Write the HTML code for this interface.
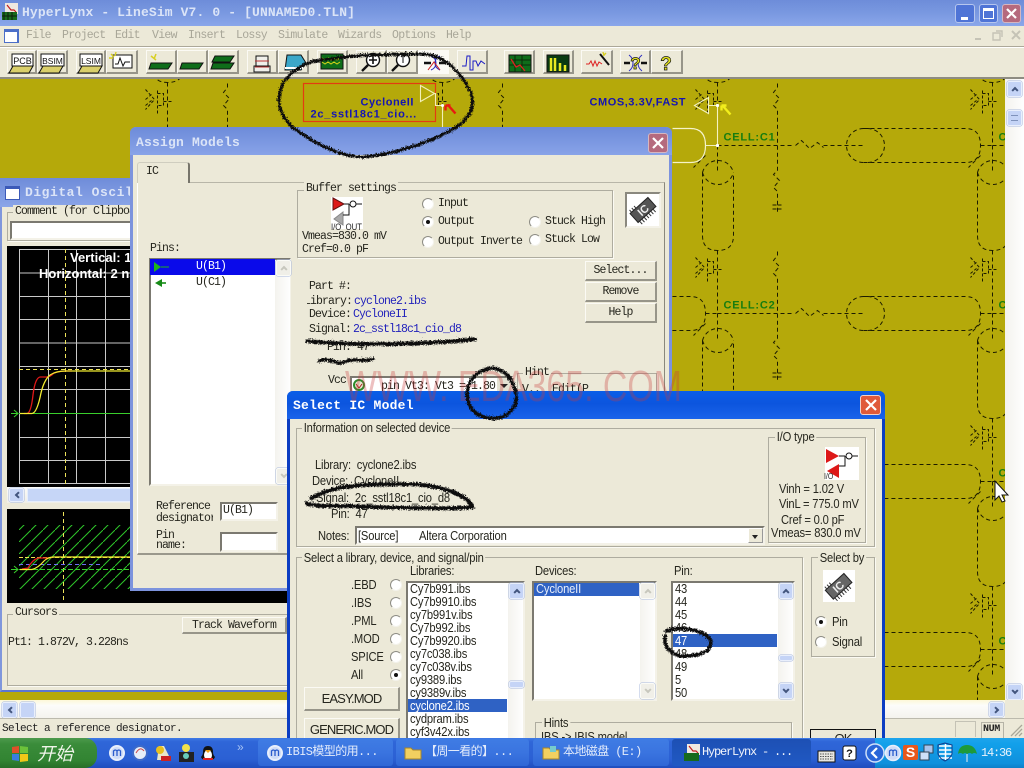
<!DOCTYPE html>
<html><head><meta charset="utf-8"><title>HyperLynx</title>
<style>
html,body{margin:0;padding:0;background:#ece9d8}
#p{position:relative;width:1024px;height:768px;overflow:hidden;background:#ece9d8}
.a{position:absolute;box-sizing:border-box}
.t{position:absolute;white-space:pre;line-height:14px;height:14px;color:#26261e}
.m{font-family:"Liberation Mono",monospace;font-size:11.5px;letter-spacing:-.9px}
.s{font-family:"Liberation Sans",sans-serif;font-size:13px;letter-spacing:-.2px}
.t.s,.gt.s{transform:scaleX(.86);transform-origin:0 50%}
.b{position:absolute;box-sizing:border-box;background:#ece9d8;border:1px solid;border-color:#fbfaf4 #979589 #979589 #fbfaf4;border-right-width:2px;border-bottom-width:2px;text-align:center;color:#26261e}
.b.s{letter-spacing:-.9px}
.sk{position:absolute;box-sizing:border-box;background:#fff;border:2px solid;border-color:#7b7970 #f4f2e8 #f4f2e8 #7b7970}
.g{position:absolute;box-sizing:border-box;border:1px solid #aeac9f;box-shadow:1px 1px 0 #fbfaf3}
.gt{position:absolute;white-space:pre;line-height:14px;height:14px;background:#ece9d8;padding:0 2px;color:#26261e}
.r{position:absolute;width:12px;height:12px;box-sizing:border-box;border-radius:50%;background:#fff;border:1.5px solid;border-color:#8d8c84 #f4f3ec #f4f3ec #8d8c84}
.r.c::after{content:"";position:absolute;left:2.5px;top:2.5px;width:4px;height:4px;border-radius:50%;background:#111}
.sb{position:absolute;box-sizing:border-box;background:linear-gradient(90deg,#f4f3ee,#fefefe)}
.x{position:absolute;box-sizing:border-box;background:#c5d4f6;border:1px solid #e9effc;border-radius:2px;box-shadow:0 0 0 .5px #a8b8dc}
.x::after{content:"";position:absolute;left:50%;top:50%;width:5px;height:5px;box-sizing:border-box;border:solid #42557e;border-width:2px 0 0 2px}
.x.u::after{transform:translate(-50%,-25%) rotate(45deg)}
.x.d::after{transform:translate(-50%,-75%) rotate(225deg)}
.x.l::after{transform:translate(-25%,-50%) rotate(-45deg)}
.x.ri::after{transform:translate(-75%,-50%) rotate(135deg)}
.x.n::after{display:none}
.dis{background:#f0efe8;border-color:#fbfbf6}
.dis::after{border-color:#c7c7bd}
.sel{position:absolute;background:#2f62c4}
.tb{position:absolute;top:739px;height:27px;box-sizing:border-box;background:linear-gradient(180deg,#3f7ce4,#3a74e0 50%,#2f67d6);border-radius:3px;font-family:"Liberation Mono","Noto Sans CJK SC",sans-serif;font-size:12px;letter-spacing:-.6px;color:#e4ecfb;line-height:27px;white-space:pre}
</style></head><body><div id="p">

<!-- main title -->
<div class="a" style="left:0;top:0;width:1024px;height:26px;background:linear-gradient(180deg,#6d8cd9,#7b9ae1 55%,#8aa6ea)"></div>
<svg class="a" style="left:2px;top:3px" width="17" height="18"><rect x="3" y="0" width="13" height="11" fill="#efe8e0"/><path d="M5 2l4 5 3 0 2 2" stroke="#c21c1c" stroke-width="1.2" fill="none"/><rect x="0" y="9" width="15" height="8" fill="#176a1c"/><path d="M2 9v8M6 9v8M10 9v8M0 13h15" stroke="#0c1f0c"/></svg>
<div class="t m" style="left:22px;top:6px;font-size:13px;font-weight:bold;letter-spacing:.13px;color:#dbe4f7">HyperLynx - LineSim V7. 0 - [UNNAMED0.TLN]</div>
<div class="a" style="left:955px;top:4px;width:20px;height:19px;background:#4f74d6;border:1px solid #b6c6ee;border-radius:3px"><div class="a" style="left:5px;top:12px;width:7px;height:3px;background:#fff"></div></div>
<div class="a" style="left:979px;top:4px;width:19px;height:19px;background:#4f74d6;border:1px solid #b6c6ee;border-radius:3px"><div class="a" style="left:3px;top:3px;width:11px;height:11px;border:1px solid #fff;border-top-width:3px"></div></div>
<div class="a" style="left:1002px;top:4px;width:19px;height:19px;background:#b56a7e;border:1px solid #d6b6c0;border-radius:3px"><svg class="a" style="left:2px;top:2px" width="13" height="13"><path d="M2 2l9 9M11 2l-9 9" stroke="#fff" stroke-width="2.2"/></svg></div>

<!-- menu -->
<div class="a" style="left:4px;top:29px;width:15px;height:14px;background:#fff;border:1px solid #4c6fc8;border-top-width:3px;border-right-width:2px"></div>
<div class="t m" style="left:26px;top:29px;color:#a8a698;letter-spacing:-.7px">File</div>
<div class="t m" style="left:62px;top:29px;color:#a8a698;letter-spacing:-.7px">Project</div>
<div class="t m" style="left:115px;top:29px;color:#a8a698;letter-spacing:-.7px">Edit</div>
<div class="t m" style="left:152px;top:29px;color:#a8a698;letter-spacing:-.7px">View</div>
<div class="t m" style="left:188px;top:29px;color:#a8a698;letter-spacing:-.7px">Insert</div>
<div class="t m" style="left:236px;top:29px;color:#a8a698;letter-spacing:-.7px">Lossy</div>
<div class="t m" style="left:278px;top:29px;color:#a8a698;letter-spacing:-.7px">Simulate</div>
<div class="t m" style="left:338px;top:29px;color:#a8a698;letter-spacing:-.7px">Wizards</div>
<div class="t m" style="left:392px;top:29px;color:#a8a698;letter-spacing:-.7px">Options</div>
<div class="t m" style="left:446px;top:29px;color:#a8a698;letter-spacing:-.7px">Help</div>
<svg class="a" style="left:970px;top:28px" width="52" height="14"><path d="M5 11h6" stroke="#c5c3b6" stroke-width="2"/><path d="M26 3h6v6M23 5h7v7h-7z" stroke="#c5c3b6" stroke-width="1.4" fill="none"/><path d="M42 3l8 8M50 3l-8 8" stroke="#c5c3b6" stroke-width="2"/></svg>
<div class="a" style="left:0;top:46px;width:1024px;height:1px;background:#aca899"></div>
<div class="a" style="left:0;top:47px;width:1024px;height:1px;background:#fff"></div>

<!-- toolbar buttons -->
<div class="b" style="left:7px;top:50px;width:30px;height:24px"></div>
<div class="b" style="left:37px;top:50px;width:31px;height:24px"></div>
<div class="b" style="left:76px;top:50px;width:30px;height:24px"></div>
<div class="b" style="left:106px;top:50px;width:32px;height:24px"></div>
<div class="b" style="left:146px;top:50px;width:31px;height:24px"></div>
<div class="b" style="left:177px;top:50px;width:31px;height:24px"></div>
<div class="b" style="left:208px;top:50px;width:31px;height:24px"></div>
<div class="b" style="left:247px;top:50px;width:31px;height:24px"></div>
<div class="b" style="left:278px;top:50px;width:31px;height:24px"></div>
<div class="b" style="left:317px;top:50px;width:31px;height:24px"></div>
<div class="b" style="left:356px;top:50px;width:31px;height:24px"></div>
<div class="b" style="left:387px;top:50px;width:31px;height:24px"></div>
<div class="a" style="left:418px;top:50px;width:31px;height:24px;background:#fbfaf5"></div>
<div class="b" style="left:457px;top:50px;width:31px;height:24px"></div>
<div class="b" style="left:504px;top:50px;width:31px;height:24px"></div>
<div class="b" style="left:543px;top:50px;width:31px;height:24px"></div>
<div class="b" style="left:581px;top:50px;width:32px;height:24px"></div>
<div class="b" style="left:620px;top:50px;width:31px;height:24px"></div>
<div class="b" style="left:651px;top:50px;width:32px;height:24px"></div>
<svg class="a" style="left:0;top:48px" width="700" height="30">
<g stroke="#111" fill="#d9cf6a" stroke-width="1"><path d="M13 18h20l-4 7H9z"/><path d="M43 18h20l-4 7H39z"/><path d="M82 18h20l-4 7H78z"/></g>
<g fill="#fff" stroke="#111"><rect x="12" y="6" width="21" height="12"/><rect x="41" y="6" width="23" height="12"/><rect x="80" y="6" width="22" height="12"/><rect x="113" y="7" width="19" height="13"/></g>
<text x="22.5" y="16" text-anchor="middle" font-family="Liberation Sans" font-size="9" fill="#111">PCB</text>
<text x="52.5" y="16" text-anchor="middle" font-family="Liberation Sans" font-size="8.5" fill="#111">BSIM</text>
<text x="91" y="16" text-anchor="middle" font-family="Liberation Sans" font-size="8.5" fill="#111">LSIM</text>
<path d="M115 16l3 0 2 -6 3 8 2 -4 5 0" stroke="#111" fill="none"/>
<path d="M111 6l3 3M116 4l-1 4M109 10l4 0" stroke="#d8cf20" stroke-width="1.4"/>
<g stroke="#111"><path d="M151 15h21l-4 6h-19z" fill="#0e6d1a"/><path d="M182 15h21l-4 6h-19z" fill="#0e6d1a"/><path d="M213 15h21l-4 6h-19z" fill="#0e6d1a"/><path d="M215 8h19l-4 6h-18z" fill="#0e6d1a"/></g>
<path d="M151 8l5 4M156 6l-2 5" stroke="#d8cf20" stroke-width="1.5"/>
<path d="M254 18h16v6h-16zM256 8h12v10h-12z" fill="#efefea" stroke="#111"/><path d="M255 13h14M255 19h14" stroke="#b33" />
<path d="M287 7h14l5 8-5 7h-16z" fill="#3ba7c9" stroke="#111"/><path d="M285 20h18" stroke="#fff" stroke-width="2"/>
<rect x="321" y="6" width="22" height="15" fill="#0e6d1a" stroke="#111"/><path d="M322 10l3 2 3-2 3 2 3-2 3 2 3-2M322 14l3 2 3-2 3 2 3-2 3 2 3-2" stroke="#d6d21a" fill="none"/>
<circle cx="373" cy="12" r="6.5" fill="#fff" stroke="#111" stroke-width="1.4"/><path d="M373 8v8M369 12h8" stroke="#111" stroke-width="1.6"/><path d="M368 17l-6 6" stroke="#111" stroke-width="2.4"/>
<circle cx="403" cy="12" r="6.5" fill="#fff" stroke="#111" stroke-width="1.4"/><path d="M403 8v7M401 9l2-2 2 2" stroke="#111" fill="none"/><path d="M398 17l-6 6" stroke="#111" stroke-width="2.4"/>
<path d="M424 15h7M439 15h7" stroke="#111" stroke-width="2.6"/><path d="M431 8q5 2 5 7t-5 7M440 8q-5 2-5 7t5 7" stroke="#2a2ac0" fill="none"/><path d="M428 22l6-8 6 8" stroke="#c22" fill="none"/>
<path d="M462 18l4 0 1-10 3 0 0 14 3 0 0-9 3 0 2 5 3-5 4 3" stroke="#1a1ac4" fill="none"/>
<rect x="509" y="7" width="22" height="17" fill="#0e6d1a" stroke="#111"/><path d="M509 12h22M509 17h22M515 7v17M522 7v17" stroke="#0a2a0a"/><path d="M511 11l5 8 4-2 5 6" stroke="#d22" fill="none" stroke-width="1.3"/>
<rect x="547" y="7" width="22" height="17" fill="#0a3a12" stroke="#111"/><path d="M551 23V10M555 23V10M560 23V15M565 23V17" stroke="#e8e822" stroke-width="2.5"/>
<path d="M586 16l3 0 2-3 2 5 2-5 2 5 2-4 3 2" stroke="#d22" fill="none"/><path d="M600 6l9 11" stroke="#111" stroke-width="2"/><path d="M603 4l1 4M606 5l-2 2" stroke="#d8cf20" stroke-width="1.4"/>
<path d="M624 15h6M641 15h6" stroke="#111" stroke-width="2.6"/><path d="M629 7q4 3 4 8t-4 8M642 7q-4 3-4 8t4 8" stroke="#2a2ac0" fill="none"/>
<text x="635.5" y="21" text-anchor="middle" font-family="Liberation Sans" font-weight="bold" font-size="17" fill="#e5e51f" stroke="#111" stroke-width=".7">?</text>
<text x="666" y="22" text-anchor="middle" font-family="Liberation Sans" font-weight="bold" font-size="19" fill="#e5e51f" stroke="#111" stroke-width=".7">?</text>
</svg>
<div class="a" style="left:0;top:77px;width:1024px;height:2px;background:#8e8c82"></div>

<!-- canvas -->
<svg class="a" style="left:0;top:79px" width="1005" height="621">
<defs><g id="c" fill="none" stroke="#1c1c00" stroke-width="1" stroke-dasharray="4 3">
<path d="M0 0H75M78 0l6-5 8 8 8-6 6 5M106 0H145"/>
<path d="M146-17H248Q263-17 263 0Q263 17 248 17H146"/><path d="M146-17A17 17 0 0 0 146 17M150-17A17 17 0 0 1 150 17" /><path d="M263 0H275M263 10l-12 12"/>
<path d="M0-63V27"/><path d="M-15 27V90Q-15 105 0 105Q16 105 16 90V27"/><path d="M-15 27A16 16 0 0 0 16 27M-15 27A16 16 0 0 1 16 27" />
<path d="M60-62V-58l-4 5 6 6-6 7 4 4V25l-4 4 6 6-6 7 4 4V69"/>
<path d="M55 59.500H65M55 63.500H65" stroke-dasharray="4 1"/>
<path d="M-22 112l9 10-9 10M-22 122l6-5M-22 128l6-5M-10 113V136M-10 116h6v12h-6M-4 124h8" stroke-dasharray="3 2"/>
</g></defs>
<rect width="1005" height="621" fill="#b5a90a"/>
<g transform="translate(.5 -78.5)">
<use href="#c" x="167" y="-23"/><use href="#c" x="442" y="-23"/><use href="#c" x="717" y="-23"/><use href="#c" x="992" y="-23"/>
<use href="#c" x="167" y="145"/><use href="#c" x="442" y="145"/><use href="#c" x="717" y="145"/><use href="#c" x="992" y="145"/>
<use href="#c" x="167" y="313"/><use href="#c" x="442" y="313"/><use href="#c" x="717" y="313"/><use href="#c" x="992" y="313"/>
<use href="#c" x="167" y="481"/><use href="#c" x="442" y="481"/><use href="#c" x="717" y="481"/><use href="#c" x="992" y="481"/>
<use href="#c" x="167" y="649"/><use href="#c" x="442" y="649"/><use href="#c" x="717" y="649"/><use href="#c" x="992" y="649"/>
<rect x="303" y="83" width="132" height="38" fill="#b5a90a" stroke="#e33b12" stroke-width="1.2"/>
<path d="M420 85l14 8-14 8zM434 93h1V105H442M442 105V127" fill="none" stroke="#f2f0b8" stroke-width="1.1"/>
<circle cx="442" cy="105" r="1.5" fill="#fff"/>
<path d="M447 104l8 9M445 105h5M445 105v5" stroke="#e81a10" stroke-width="2.4" fill="none"/>
<path d="M708 97l-14 8 14 8zM694 105M708 105H717V145H705M717 145" fill="none" stroke="#f4f2c0" stroke-width="1.1"/>
<path d="M672 128H690Q705 128 705 145Q705 162 690 162H672" fill="none" stroke="#f6f4c8" stroke-width="1.2"/>
<circle cx="717" cy="105" r="1.6" fill="#fff"/><circle cx="717" cy="145" r="1.6" fill="#fff"/>
<path d="M722 105l8 9M721 105h5M721 105v5" stroke="#f2ee1c" stroke-width="2.4" fill="none"/>
<g font-family="Liberation Sans" font-weight="bold" font-size="11">
<text x="360" y="105" fill="#1414b4" letter-spacing=".5">CycloneII</text>
<text x="310" y="117" fill="#1414b4" letter-spacing=".75">2c_sstl18c1_cio...</text>
<text x="589" y="105" fill="#1414b4" letter-spacing=".55">CMOS,3.3V,FAST</text>
<text x="723" y="140" fill="#177d0f" letter-spacing=".8">CELL:C1</text>
<text x="723" y="308" fill="#177d0f" letter-spacing=".8">CELL:C2</text>
<text x="998" y="140" fill="#177d0f">C</text><text x="998" y="308" fill="#177d0f">C</text><text x="998" y="476" fill="#177d0f">C</text><text x="998" y="644" fill="#177d0f">C</text>
</g></g>
</svg>
<!-- right scroll -->
<div class="sb" style="left:1005px;top:79px;width:19px;height:621px"></div>
<div class="x u" style="left:1007px;top:81px;width:15px;height:16px"></div>
<div class="x n" style="left:1007px;top:110px;width:15px;height:16px"></div>
<div class="a" style="left:1011px;top:115px;width:7px;height:6px;border-top:1px solid #7f92bb;border-bottom:1px solid #7f92bb"></div>
<div class="x d" style="left:1007px;top:684px;width:15px;height:16px"></div>
<!-- bottom scroll -->
<div class="a" style="left:0;top:700px;width:1005px;height:18px;background:linear-gradient(180deg,#fdf8d8,#fcfcfa 30%,#f4f3ee)"></div>
<div class="a" style="left:1005px;top:700px;width:19px;height:18px;background:#ece9d8"></div>
<div class="x l" style="left:2px;top:702px;width:15px;height:16px"></div>
<div class="x n" style="left:20px;top:702px;width:15px;height:16px"></div>
<div class="x ri" style="left:989px;top:702px;width:15px;height:15px"></div>
<!-- status -->
<div class="a" style="left:0;top:718px;width:1024px;height:20px;background:#ece9d8;border-top:1px solid #bcbaad"></div>
<div class="t m" style="left:2px;top:722px;font-size:11px;letter-spacing:-.6px;color:#222">Select a reference designator.</div>
<div class="a" style="left:955px;top:721px;width:21px;height:16px;border:1px solid #c4c2b5;border-bottom:0"></div>
<div class="a" style="left:981px;top:722px;width:23px;height:16px;border:1px solid #b5b3a6;border-bottom:0"></div>
<div class="t m" style="left:983px;top:723px;font-weight:bold;font-size:10px;letter-spacing:-.4px;color:#222">NUM</div>
<svg class="a" style="left:1010px;top:724px" width="13" height="13"><path d="M1 12L12 1M5 12l7-7M9 12l3-3" stroke="#a9a799" stroke-width="1.3"/></svg>

<!-- ========= oscilloscope ========= -->
<div class="a" style="left:0;top:178px;width:290px;height:514px;background:#ece9d8;border-left:2px solid #7f96dc;border-bottom:2px solid #5b76d2"></div>
<div class="a" style="left:0;top:178px;width:290px;height:29px;background:linear-gradient(180deg,#6f8cd9,#8aa5e8)"></div>
<div class="a" style="left:5px;top:186px;width:15px;height:14px;background:#fff;border:1px solid #3c5ab8;border-top-width:3px"></div>
<div class="t m" style="left:25px;top:186px;font-size:13px;font-weight:bold;letter-spacing:.53px;color:#dbe4f7">Digital Oscilloscope</div>
<div class="g" style="left:7px;top:212px;width:285px;height:29px"></div>
<div class="gt m" style="left:13px;top:205px">Comment (for Clipboard)</div>
<div class="sk" style="left:10px;top:221px;width:270px;height:19px"></div>
<svg class="a" style="left:7px;top:246px" width="280" height="241" viewBox="7 246 280 241">
<rect x="7" y="246" width="280" height="241" fill="#000"/>
<g stroke="#c9c9c9" stroke-width="1" fill="none"><path d="M19.5 249V483M48.5 249V483M76.5 249V483M105.5 249V483M134 249V483M163 249V483M192 249V483M221 249V483M250 249V483M279 249V483"/>
<path d="M19 249.5H287M19 273H287M19 296.5H287M19 319.5H287M19 343H287M19 366.5H287M19 389.5H287M19 437.5H287M19 460.5H287M19 483.5H287"/></g>
<path d="M65.5 249V487" stroke="#eee35a" stroke-dasharray="4 3"/>
<path d="M19 369.5H287" stroke="#eee35a" stroke-dasharray="4 3"/>
<path d="M19 413.5H287" stroke="#39cf2c" stroke-width="1"/>
<path d="M11 413.5h7M14 410l4 3.5-4 3.5" stroke="#39cf2c" fill="none"/>
<path d="M24 413.5H27Q31 413 33 395Q35 378 40 377H47Q50 377 54 373Q60 371 66 371H72" stroke="#e01818" stroke-width="1.3" fill="none"/>
<path d="M20 413.5H32Q37 413 41 393Q44 380 50 375Q56 371 66 371H287" stroke="#f4ee30" stroke-width="1.3" fill="none"/>
<text x="70" y="262" font-family="Liberation Sans" font-weight="bold" font-size="13" fill="#fff">Vertical: 1 V/div</text>
<text x="39" y="278" font-family="Liberation Sans" font-weight="bold" font-size="13" fill="#fff">Horizontal: 2 ns/div</text>
</svg>
<div class="a" style="left:7px;top:487px;width:285px;height:16px;background:linear-gradient(180deg,#fbfbf8,#f0efe8)"></div>
<div class="x l" style="left:9px;top:488px;width:15px;height:14px"></div>
<div class="a" style="left:27px;top:488px;width:110px;height:14px;background:#c6d6f7;border:1px solid #e6eefc"></div>
<svg class="a" style="left:7px;top:509px" width="285" height="94" viewBox="7 509 285 94">
<defs><pattern id="h" width="12" height="12" patternUnits="userSpaceOnUse" patternTransform="translate(7 2)"><path d="M-1 13L13-1" stroke="#2ec62a" stroke-width="1"/></pattern></defs>
<rect x="7" y="509" width="285" height="94" fill="#000"/>
<rect x="19" y="525" width="268" height="64" fill="url(#h)"/>
<path d="M63.5 512V600" stroke="#eee35a" stroke-dasharray="4 3"/>
<path d="M19 557.5H287" stroke="#f0e050" stroke-dasharray="4 2"/>
<path d="M19 569.5H287" stroke="#39cf2c" stroke-dasharray="5 2"/>
<path d="M19 564.5H100" stroke="#6c6cf0" stroke-dasharray="4 3"/>
<path d="M11 569.5h7M14 566l4 3.5-4 3.5" stroke="#39cf2c" fill="none"/>
<path d="M22 569L28 568Q32 560 38 558H46Q50 558 54 557" stroke="#e01818" stroke-width="1.3" fill="none"/>
<path d="M20 569.5H32Q38 568 44 561Q48 557 54 557H287" stroke="#f4ee30" stroke-width="1.2" fill="none"/>
</svg>
<div class="g" style="left:7px;top:614px;width:285px;height:72px"></div>
<div class="gt m" style="left:13px;top:606px">Cursors</div>
<div class="b m" style="left:182px;top:617px;width:105px;height:17px;line-height:15px">Track Waveform</div>
<div class="t m" style="left:8px;top:636px">Pt1: 1.872V, 3.228ns</div>
<div class="a" style="left:2px;top:692px;width:285px;height:8px;background:#b5a90a"></div>

<!-- ========= assign models ========= -->
<div class="a" style="left:130px;top:127px;width:542px;height:464px;background:#ece9d8;border:3px solid #7c93dd;border-top:0;border-radius:6px 6px 0 0"></div>
<div class="a" style="left:130px;top:127px;width:542px;height:28px;background:linear-gradient(180deg,#6d8bd9,#88a3e8);border-radius:6px 6px 0 0"></div>
<div class="t m" style="left:136px;top:136px;font-size:13px;font-weight:bold;letter-spacing:.2px;color:#dbe4f7">Assign Models</div>
<div class="a" style="left:648px;top:133px;width:20px;height:20px;background:#b56a7e;border:1px solid #d6b6c0;border-radius:3px"><svg class="a" style="left:2px;top:3px" width="14" height="13"><path d="M2 1l10 10M12 1L2 11" stroke="#fff" stroke-width="2.2"/></svg></div>
<!-- tab -->
<div class="a" style="left:137px;top:182px;width:528px;height:373px;border:1px solid #b8b6a8;border-right-color:#8a887c;border-bottom:2px solid #9a988c;border-left-color:#fff"></div>
<div class="a" style="left:137px;top:162px;width:53px;height:21px;background:#ece9d8;border:1px solid #cfcdbf;border-right:2px solid #77756b;border-bottom:0;border-radius:3px 3px 0 0"></div>
<div class="t m" style="left:146px;top:165px">IC</div>
<!-- buffer settings -->
<div class="g" style="left:297px;top:190px;width:316px;height:68px"></div>
<div class="gt m" style="left:304px;top:182px">Buffer settings</div>
<svg class="a" style="left:331px;top:197px" width="33" height="33"><rect width="32" height="32" fill="#fff"/><path d="M2 1l11 6-11 6z" fill="#dd1818" stroke="#611"/><path d="M12 15v13L3 22z" fill="#a9a9a9" stroke="#888"/><path d="M13 7h5M18 7v11h-6" stroke="#111" fill="none"/><path d="M22 7h9M22 4v6" stroke="#111" fill="none"/><circle cx="22" cy="7" r="3" fill="#fff" stroke="#111"/></svg>
<div class="t s" style="left:331px;top:220px;font-size:9px;letter-spacing:0;color:#222">I/O  OUT</div>
<div class="t m" style="left:302px;top:230px">Vmeas=830.0 mV</div>
<div class="t m" style="left:302px;top:243px">Cref=0.0 pF</div>
<div class="r" style="left:422px;top:198px"></div><div class="t m" style="left:438px;top:197px">Input</div>
<div class="r c" style="left:422px;top:216px"></div><div class="t m" style="left:438px;top:215px">Output</div>
<div class="r" style="left:422px;top:236px"></div><div class="t m" style="left:438px;top:235px">Output Inverte</div>
<div class="r" style="left:529px;top:216px"></div><div class="t m" style="left:545px;top:215px">Stuck High</div>
<div class="r" style="left:529px;top:234px"></div><div class="t m" style="left:545px;top:233px">Stuck Low</div>
<!-- IC button -->
<div class="a" style="left:625px;top:192px;width:36px;height:36px;background:#fff;border:2px solid;border-color:#8a887e #f4f2e8 #f4f2e8 #8a887e"></div>
<svg class="a" style="left:627px;top:194px" width="33" height="33"><g transform="rotate(-42 16 16)"><rect x="4" y="10" width="24" height="12" fill="#555" stroke="#222"/><path d="M6 22v4M9 22v4M12 22v4M15 22v4M18 22v4M21 22v4M24 22v4M6 10v-3M9 10v-3M12 10v-3" stroke="#333"/><text x="16" y="20" text-anchor="middle" font-family="Liberation Sans" font-weight="bold" font-size="11" fill="#eee">IC</text></g></svg>
<!-- buttons -->
<div class="b m" style="left:585px;top:261px;width:72px;height:20px;line-height:17px">Select...</div>
<div class="b m" style="left:585px;top:282px;width:72px;height:20px;line-height:17px">Remove</div>
<div class="b m" style="left:585px;top:303px;width:72px;height:20px;line-height:17px">Help</div>
<!-- pins -->
<div class="t m" style="left:150px;top:242px">Pins:</div>
<div class="sk" style="left:149px;top:258px;width:142px;height:228px"></div>
<div class="a" style="left:150px;top:259px;width:125px;height:16px;background:#0a0aea"></div>
<div class="sb" style="left:275px;top:260px;width:15px;height:224px"></div>
<div class="x u dis" style="left:276px;top:260px;width:15px;height:16px"></div>
<div class="x d dis" style="left:276px;top:468px;width:15px;height:16px"></div>
<svg class="a" style="left:152px;top:261px" width="20" height="30"><path d="M2 1l7 5-7 5z" fill="#1db31d"/><path d="M9 6h8" stroke="#1db31d"/><path d="M10 18l-7 4 7 4z" fill="#168a16"/><path d="M10 22h4" stroke="#168a16" stroke-width="1.6"/></svg>
<div class="t m" style="left:196px;top:260px;color:#fff">U(B1)</div>
<div class="t m" style="left:196px;top:276px">U(C1)</div>
<div class="t m" style="left:156px;top:500px">Reference</div>
<div class="t m" style="left:156px;top:512px;width:57px;overflow:hidden">designator</div>
<div class="sk" style="left:220px;top:502px;width:58px;height:19px"></div>
<div class="t m" style="left:223px;top:504px">U(B1)</div>
<div class="t m" style="left:156px;top:529px">Pin</div>
<div class="t m" style="left:156px;top:539px">name:</div>
<div class="sk" style="left:220px;top:532px;width:58px;height:20px"></div>
<!-- part info -->
<div class="t m" style="left:309px;top:280px">Part #:</div>
<div class="t m" style="left:307px;top:295px;width:46px;overflow:hidden;text-indent:-3px">Library:</div>
<div class="t m" style="left:354px;top:295px;color:#2222bb">cyclone2.ibs</div>
<div class="t m" style="left:309px;top:308px">Device:</div>
<div class="t m" style="left:353px;top:308px;color:#2222bb">CycloneII</div>
<div class="t m" style="left:309px;top:323px">Signal:</div>
<div class="t m" style="left:353px;top:323px;color:#2222bb">2c_sstl18c1_cio_d8</div>
<div class="t m" style="left:327px;top:341px">Pin: 47</div>
<div class="t m" style="left:328px;top:374px">Vcc</div>
<div class="sk" style="left:350px;top:376px;width:163px;height:20px"></div>
<svg class="a" style="left:352px;top:378px" width="14" height="14"><circle cx="7" cy="7" r="5" fill="#e8e6d0" stroke="#2c8a2c" stroke-width="2"/><path d="M4 6l3 4 3-4" stroke="#a22" fill="none"/></svg>
<div class="t m" style="left:381px;top:380px">pin Vt3: Vt3 = 1.80</div>
<div class="a" style="left:497px;top:378px;width:14px;height:16px;background:#e4e2d2"></div>
<div class="a" style="left:500px;top:384px;width:0;height:0;border:4px solid transparent;border-top:4px solid #222"></div>
<div class="g" style="left:517px;top:373px;width:140px;height:34px"></div>
<div class="gt m" style="left:523px;top:366px">Hint</div>
<div class="t m" style="left:522px;top:383px">V..  Edit(P</div>

<!-- ========= select IC model ========= -->
<div class="a" style="left:287px;top:391px;width:598px;height:360px;background:#ece9d8;border:3px solid #0c3dc2;border-top:0;border-radius:6px 6px 0 0"></div>
<div class="a" style="left:287px;top:391px;width:598px;height:28px;background:linear-gradient(180deg,#0a5ee8,#0c55de 45%,#1a63ea);border-radius:6px 6px 0 0"></div>
<div class="t m" style="left:293px;top:399px;font-size:13px;font-weight:bold;letter-spacing:.25px;color:#fff">Select IC Model</div>
<div class="a" style="left:860px;top:395px;width:21px;height:20px;background:#e05a3a;border:1px solid #f2d2c8;border-radius:3px"><svg class="a" style="left:3px;top:3px" width="14" height="13"><path d="M2 1l10 10M12 1L2 11" stroke="#fff" stroke-width="2.2"/></svg></div>
<div class="g" style="left:296px;top:428px;width:579px;height:119px"></div>
<div class="gt s" style="left:302px;top:421px">Information on selected device</div>
<div class="t s" style="left:315px;top:458px">Library:  cyclone2.ibs</div>
<div class="t s" style="left:312px;top:474px">Device:  CycloneII</div>
<div class="t s" style="left:316px;top:491px">Signal:  2c_sstl18c1_cio_d8</div>
<div class="t s" style="left:331px;top:507px">Pin:  47</div>
<div class="t s" style="left:318px;top:529px">Notes:</div>
<div class="sk" style="left:355px;top:526px;width:410px;height:19px"></div>
<div class="t s" style="left:358px;top:529px">[Source]</div>
<div class="t s" style="left:419px;top:529px">Altera Corporation</div>
<div class="a" style="left:748px;top:528px;width:15px;height:15px;background:#ece9d8;border:1px solid;border-color:#fff #999 #999 #fff"></div>
<div class="a" style="left:752px;top:535px;width:0;height:0;border:3.5px solid transparent;border-top:4px solid #222"></div>
<!-- IO type -->
<div class="g" style="left:768px;top:437px;width:98px;height:106px"></div>
<div class="gt s" style="left:775px;top:430px">I/O type</div>
<svg class="a" style="left:825px;top:447px" width="34" height="33"><rect width="34" height="33" fill="#fff"/><path d="M1 2l13 7-13 7z" fill="#dd1818"/><path d="M14 17v14L2 24z" fill="#dd1818"/><path d="M14 9h6M20 9v10h-6" stroke="#111" fill="none"/><path d="M25 9h8M24 6v6" stroke="#111" fill="none"/><circle cx="24" cy="9" r="3" fill="#fff" stroke="#111"/></svg>
<div class="t s" style="left:824px;top:470px;font-size:8px;letter-spacing:0;color:#222">I/O</div>
<div class="t s" style="left:779px;top:482px">Vinh = 1.02 V</div>
<div class="t s" style="left:779px;top:497px">VinL = 775.0 mV</div>
<div class="t s" style="left:781px;top:513px">Cref = 0.0 pF</div>
<div class="t s" style="left:771px;top:526px">Vmeas= 830.0 mV</div>
<!-- select library -->
<div class="g" style="left:296px;top:557px;width:507px;height:200px"></div>
<div class="gt s" style="left:302px;top:551px">Select a library, device, and signal/pin</div>
<div class="t s" style="left:410px;top:564px">Libraries:</div>
<div class="t s" style="left:535px;top:564px">Devices:</div>
<div class="t s" style="left:674px;top:564px">Pin:</div>
<div class="t s" style="left:351px;top:578px">.EBD</div><div class="r" style="left:390px;top:579px"></div>
<div class="t s" style="left:351px;top:596px">.IBS</div><div class="r" style="left:390px;top:597px"></div>
<div class="t s" style="left:351px;top:614px">.PML</div><div class="r" style="left:390px;top:615px"></div>
<div class="t s" style="left:351px;top:632px">.MOD</div><div class="r" style="left:390px;top:633px"></div>
<div class="t s" style="left:351px;top:650px">SPICE</div><div class="r" style="left:390px;top:651px"></div>
<div class="t s" style="left:351px;top:668px">All</div><div class="r c" style="left:390px;top:669px"></div>
<div class="b s" style="left:304px;top:687px;width:96px;height:24px;line-height:21px">EASY.MOD</div>
<div class="b s" style="left:304px;top:718px;width:96px;height:30px;line-height:21px">GENERIC.MOD</div>
<!-- libs -->
<div class="sk" style="left:406px;top:581px;width:119px;height:170px"></div>
<div class="sel" style="left:408px;top:699px;width:99px;height:13px"></div>
<div class="t s" style="left:410px;top:582px">Cy7b991.ibs</div>
<div class="t s" style="left:410px;top:595px">Cy7b9910.ibs</div>
<div class="t s" style="left:410px;top:608px">cy7b991v.ibs</div>
<div class="t s" style="left:410px;top:621px">Cy7b992.ibs</div>
<div class="t s" style="left:410px;top:634px">Cy7b9920.ibs</div>
<div class="t s" style="left:410px;top:647px">cy7c038.ibs</div>
<div class="t s" style="left:410px;top:660px">cy7c038v.ibs</div>
<div class="t s" style="left:410px;top:673px">cy9389.ibs</div>
<div class="t s" style="left:410px;top:686px">cy9389v.ibs</div>
<div class="t s" style="left:410px;top:699px;color:#fff">cyclone2.ibs</div>
<div class="t s" style="left:410px;top:712px">cydpram.ibs</div>
<div class="t s" style="left:410px;top:725px">cyf3v42x.ibs</div>
<div class="sb" style="left:508px;top:583px;width:15px;height:160px"></div>
<div class="x u" style="left:509px;top:583px;width:15px;height:16px"></div>
<div class="x n" style="left:509px;top:681px;width:15px;height:7px"></div>
<!-- devices -->
<div class="sk" style="left:532px;top:581px;width:125px;height:120px"></div>
<div class="sel" style="left:534px;top:583px;width:105px;height:13px"></div>
<div class="t s" style="left:536px;top:582px;color:#e8eefa">CycloneII</div>
<div class="sb" style="left:640px;top:583px;width:15px;height:116px"></div>
<div class="x u dis" style="left:640px;top:583px;width:15px;height:16px"></div>
<div class="x d dis" style="left:640px;top:683px;width:15px;height:16px"></div>
<!-- pin -->
<div class="sk" style="left:671px;top:581px;width:124px;height:120px"></div>
<div class="sel" style="left:673px;top:634px;width:104px;height:13px"></div>
<div class="t s" style="left:675px;top:582px">43</div>
<div class="t s" style="left:675px;top:595px">44</div>
<div class="t s" style="left:675px;top:608px">45</div>
<div class="t s" style="left:675px;top:621px">46</div>
<div class="t s" style="left:675px;top:634px;color:#fff">47</div>
<div class="t s" style="left:675px;top:647px">48</div>
<div class="t s" style="left:675px;top:660px">49</div>
<div class="t s" style="left:675px;top:673px">5</div>
<div class="t s" style="left:675px;top:686px">50</div>
<div class="sb" style="left:778px;top:583px;width:15px;height:116px"></div>
<div class="x u" style="left:779px;top:583px;width:14px;height:16px"></div>
<div class="x n" style="left:779px;top:655px;width:14px;height:6px"></div>
<div class="x d" style="left:779px;top:683px;width:14px;height:16px"></div>
<!-- hints -->
<div class="g" style="left:535px;top:722px;width:257px;height:30px"></div>
<div class="gt s" style="left:542px;top:716px">Hints</div>
<div class="t s" style="left:541px;top:730px">IBS -&gt; IBIS model</div>
<!-- select by -->
<div class="g" style="left:811px;top:557px;width:64px;height:100px"></div>
<div class="gt s" style="left:818px;top:551px">Select by</div>
<svg class="a" style="left:823px;top:570px" width="32" height="32"><rect width="32" height="32" fill="#fff"/><g transform="rotate(-42 16 16)"><rect x="3" y="10" width="25" height="12" fill="#666" stroke="#222"/><path d="M5 22v4M8 22v4M11 22v4M14 22v4M17 22v4M20 22v4M23 22v4M5 10v-3M8 10v-3M11 10v-3" stroke="#333"/><text x="15" y="20" text-anchor="middle" font-family="Liberation Sans" font-weight="bold" font-size="11" fill="#eee">IC</text></g></svg>
<div class="r c" style="left:815px;top:616px"></div><div class="t s" style="left:832px;top:615px">Pin</div>
<div class="r" style="left:815px;top:636px"></div><div class="t s" style="left:832px;top:635px">Signal</div>
<div class="b s" style="left:810px;top:729px;width:66px;height:24px;border:1px solid #111;line-height:18px">OK</div>

<!-- watermark -->
<div class="t" style="left:345px;top:363px;height:48px;line-height:48px;font-family:'Liberation Sans',sans-serif;font-size:44px;letter-spacing:0;transform:scaleX(.77);transform-origin:0 50%;color:rgba(200,60,60,.32)">WWW. EDA365. COM</div>

<!-- ink -->
<svg class="a" style="left:0;top:0" width="1024" height="738">
<defs><filter id="ink" x="-10%" y="-30%" width="120%" height="160%"><feTurbulence baseFrequency=".55" numOctaves="2" seed="4"/><feDisplacementMap in="SourceGraphic" scale="4.5" xChannelSelector="R" yChannelSelector="G"/></filter></defs>
<g fill="none" stroke="#080808" stroke-width="3" filter="url(#ink)" stroke-linecap="round">
<path d="M312 60C340 57 345 53 420 53C445 53 460 72 470 92C474 108 468 118 452 128C430 140 400 152 362 156C335 155 310 140 290 125C278 112 274 100 282 82C290 70 300 64 312 60Z"/>
<path d="M306 340C350 344 420 344 474 338" stroke-width="4"/>
<path d="M318 360C330 355 335 366 345 360C355 357 362 361 372 358" stroke-width="3.5"/>
<path d="M467 400C462 380 478 367 492 367C510 370 516 388 515 400C512 412 500 419 488 417C476 415 470 410 467 400Z" stroke-width="3.5"/>
<path d="M310 497C330 486 350 483 400 483C440 482 468 495 471 506C455 508 400 507 350 505C325 505 310 505 306 502" stroke-width="4"/>
<path d="M665 630C680 625 700 628 709 638C712 650 700 655 680 655C668 652 662 645 664 635" stroke-width="3.6"/>
</g>
<path d="M995 481v19l4-4 3 6 3-1-3-6h6z" fill="#fff" stroke="#111"/>
</svg>

<!-- ========= taskbar ========= -->
<div class="a" style="left:0;top:738px;width:1024px;height:30px;background:linear-gradient(180deg,#3f7be6 0,#2f66d8 12%,#2b60d4 70%,#1f4dbd)"></div>
<div class="a" style="left:0;top:738px;width:97px;height:30px;background:linear-gradient(180deg,#4d9a4d,#3a8c3a 20%,#328432 75%,#286e28);border-radius:0 12px 12px 0"></div>
<svg class="a" style="left:10px;top:744px" width="20" height="20"><path d="M2 3l7-1v7H2z" fill="#e0502a"/><path d="M10 2l8 1v6h-8z" fill="#6cc23a"/><path d="M2 10h7v7l-7-1z" fill="#3a7ee0"/><path d="M10 10h8v7l-8 1z" fill="#f0c818"/></svg>
<div class="t" style="left:37px;top:742px;height:22px;line-height:22px;font-family:'Noto Sans CJK SC',sans-serif;font-style:italic;font-size:18px;color:#f0f5ea">开始</div>
<svg class="a" style="left:105px;top:741px" width="150" height="26">
<circle cx="12" cy="12" r="7" fill="#cfdcf7" stroke="#e8effc" stroke-width="2"/><path d="M8.500 15v-5q2-2 3.500 0v5M12 10q2-2 3.500 0v5" stroke="#2a5ccc" fill="none" stroke-width="1.3"/>
<circle cx="35" cy="12" r="7" fill="#e8eef8" stroke="#3f6ac8" stroke-width="2"/><path d="M31 12q4-7 8-2" stroke="#c44" fill="none"/>
<path d="M52 19l2-14h5l7 14z" fill="#e9e6c8"/><circle cx="55" cy="9" r="4" fill="#e8c020"/><path d="M56 15h10v5H56z" fill="#c22"/>
<rect x="74" y="11" width="15" height="10" fill="#222"/><circle cx="81" cy="15" r="3" fill="#6cb"/><circle cx="81" cy="7" r="4" fill="#f2e24a"/>
<path d="M103 5q-5 0-5 6 0 3-2 5 1 3 5 3h4q4 0 5-3-2-2-2-5 0-6-5-6z" fill="#111"/><ellipse cx="103" cy="14" rx="4" ry="5" fill="#fff"/><path d="M100 9h6l-3 3z" fill="#f0a010"/><path d="M98 18l10 0" stroke="#d22" stroke-width="2"/>
<text x="132" y="10" font-family="Liberation Sans" font-size="12" fill="#a8c4f4">»</text>
</svg>
<div class="tb" style="left:258px;width:135px;padding-left:28px">IBIS模型的用...</div>
<svg class="a" style="left:266px;top:744px" width="18" height="18"><circle cx="9" cy="9" r="7" fill="#cfdcf7" stroke="#e8effc" stroke-width="2"/><path d="M5.500 12V7q2-2 3.500 0v5M9 7q2-2 3.500 0v5" stroke="#2a5ccc" fill="none" stroke-width="1.3"/></svg>
<div class="tb" style="left:396px;width:133px;padding-left:29px">【周一看的】...</div>
<svg class="a" style="left:404px;top:745px" width="18" height="15"><path d="M1 3h6l2 2h8v9H1z" fill="#f2d060" stroke="#a8862a"/></svg>
<div class="tb" style="left:533px;width:136px;padding-left:30px">本地磁盘 (E:)</div>
<svg class="a" style="left:542px;top:745px" width="18" height="15"><path d="M1 3h6l2 2h8v9H1z" fill="#f2d060" stroke="#a8862a"/><rect x="8" y="1" width="6" height="6" fill="#7cc"/></svg>
<div class="tb" style="left:672px;width:139px;padding-left:30px;letter-spacing:-1.2px;background:linear-gradient(180deg,#1d50b4,#2059c4);color:#f2f5fc">HyperLynx - ...</div>
<svg class="a" style="left:684px;top:744px" width="17" height="18"><rect x="3" y="0" width="13" height="11" fill="#efe8e0"/><path d="M5 2l4 5 3 0 2 2" stroke="#c21c1c" stroke-width="1.2" fill="none"/><rect x="0" y="9" width="15" height="8" fill="#176a1c"/></svg>
<svg class="a" style="left:815px;top:743px" width="50" height="22"><rect x="3" y="8" width="17" height="11" fill="#e8e6e0" stroke="#111"/><path d="M5 11h13M5 13.500h13M5 16h13" stroke="#555" stroke-dasharray="1.500 1"/><rect x="28" y="3" width="13" height="14" rx="2" fill="#fff" stroke="#111"/><text x="34.500" y="14" text-anchor="middle" font-family="Liberation Sans" font-weight="bold" font-size="11" fill="#111">?</text></svg>
<div class="a" style="left:875px;top:738px;width:149px;height:30px;background:linear-gradient(180deg,#1ea4ec,#12a0ea 20%,#0f90dc 85%,#0d7fc8)"></div>
<svg class="a" style="left:862px;top:740px" width="120" height="26">
<circle cx="13" cy="13" r="9" fill="#2a66d8" stroke="#cfe0f8" stroke-width="1.5"/><path d="M15 8l-5 5 5 5" stroke="#fff" stroke-width="2.2" fill="none"/>
<circle cx="31" cy="13" r="7.500" fill="#cfdcf7" stroke="#e8effc" stroke-width="1.5"/><path d="M27.500 16v-5q2-2 3.500 0v5M31 11q2-2 3.500 0v5" stroke="#2a5ccc" fill="none" stroke-width="1.3"/>
<rect x="41" y="5" width="15" height="15" rx="2" fill="#e8581c"/><text x="48.500" y="17" text-anchor="middle" font-family="Liberation Sans" font-weight="bold" font-size="14" fill="#fff">S</text>
<rect x="62" y="5" width="9" height="8" fill="#a8c4ec" stroke="#345"/><rect x="58" y="12" width="9" height="8" fill="#cfe0f8" stroke="#345"/>
<path d="M77 6h13M77 10h13M77 14h13M77 18h13M83.500 4v16" stroke="#fff" stroke-width="1.5"/><path d="M76 5l7-2 7 2v9q-2 5-7 7-5-2-7-7z" fill="none" stroke="#123a88"/>
<path d="M96 14q1-9 9-9t10 9q-3-2-5 0-2-2-5 0-2-2-4 0-3-2-5 0z" fill="#1d9a3a"/><path d="M105 14v8" stroke="#eee"/>
</svg>
<div class="t m" style="left:981px;top:746px;color:#e8f2fc;font-size:12px;letter-spacing:-1.2px">14:36</div>

</div></body></html>
